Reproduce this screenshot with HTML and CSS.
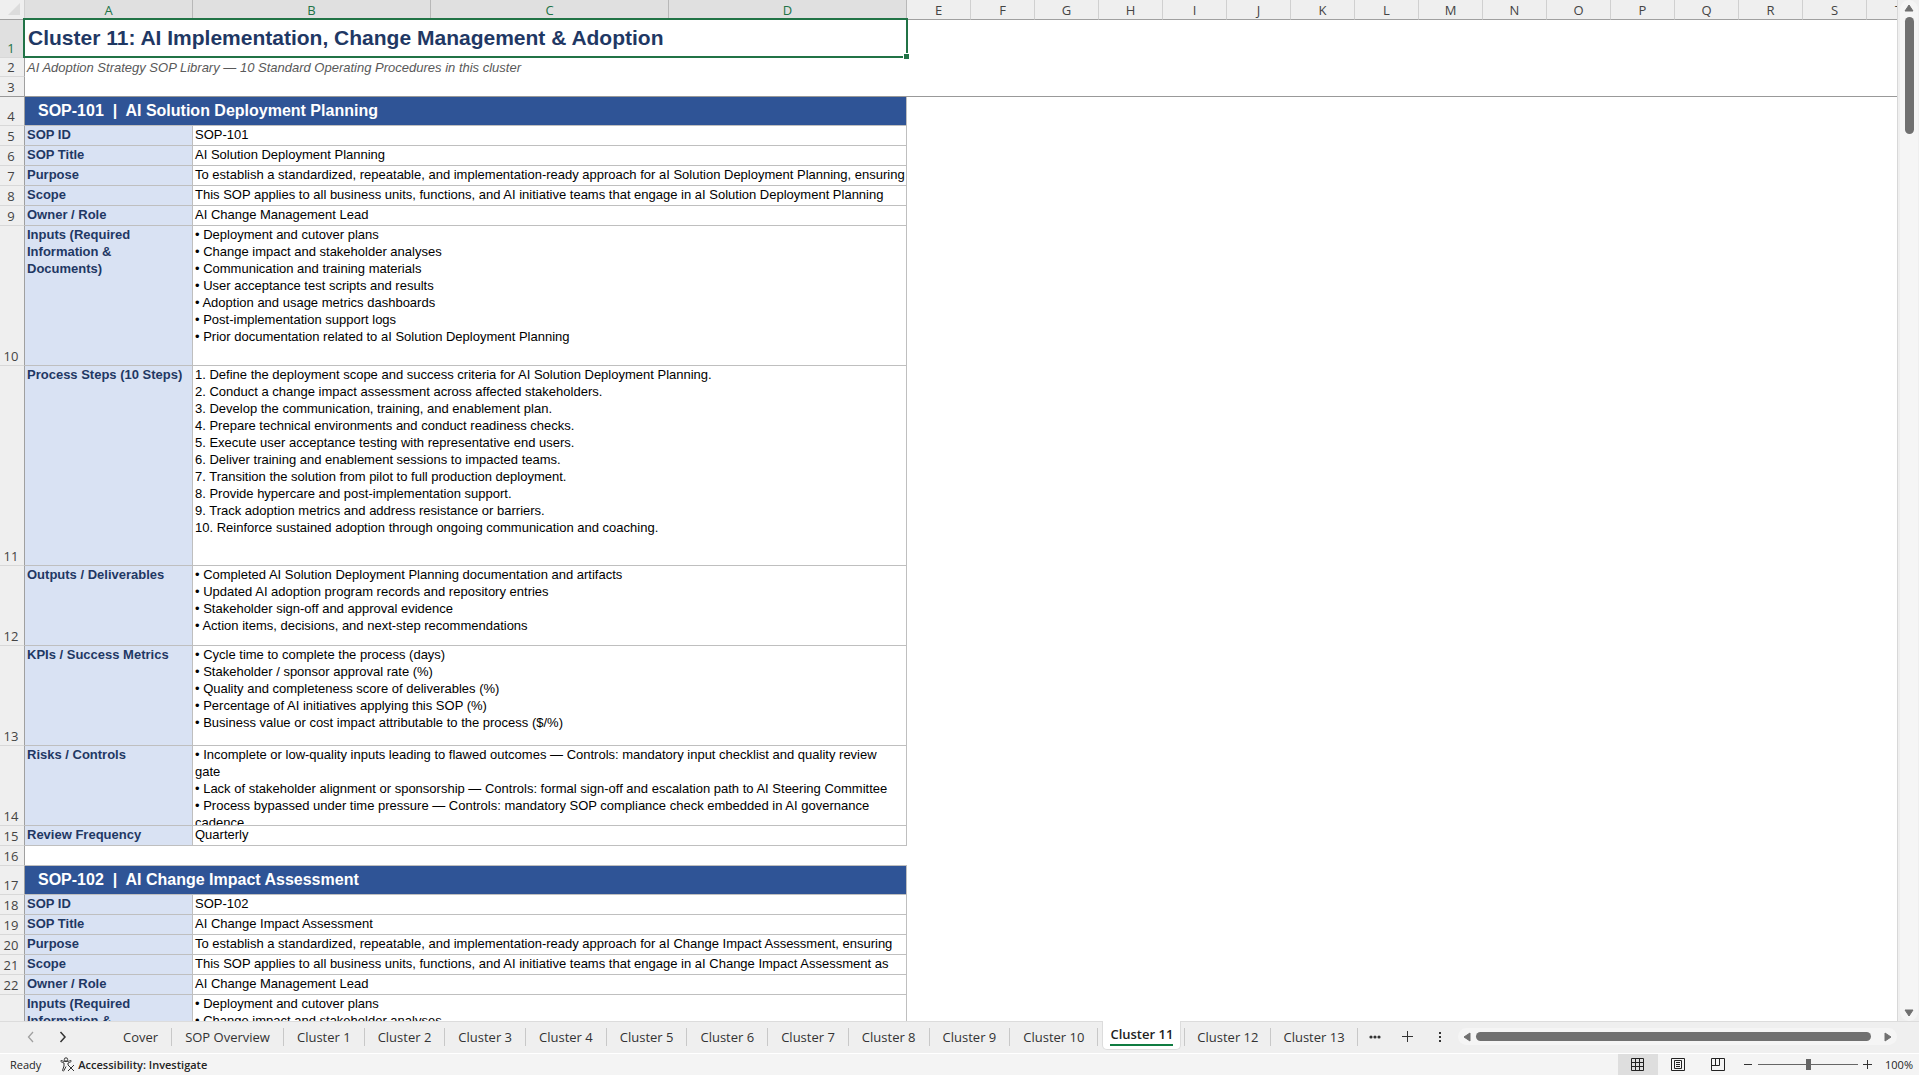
FILE: index.html
```html
<!DOCTYPE html>
<html lang="en">
<head>
    <meta charset="UTF-8">
    <meta name="viewport" content="width=device-width, initial-scale=1.0">
    <title>Cluster 11</title>
    <link rel="stylesheet" href="styles.css">
</head>
<body>

<div class="workspace">
    <div class="sheet">
        <table class="grid">
            <colgroup>
                <col class="col-rowhead">
                <col class="col-a">
                <col class="col-wide"><col class="col-wide"><col class="col-wide">
                <col class="col-std"><col class="col-std"><col class="col-std"><col class="col-std">
                <col class="col-std"><col class="col-std"><col class="col-std"><col class="col-std">
                <col class="col-std"><col class="col-std"><col class="col-std"><col class="col-std">
                <col class="col-std"><col class="col-std"><col class="col-std"><col class="col-std">
            </colgroup>
            <thead>
                <tr>
                    <th class="corner"><svg width="13" height="13" viewBox="0 0 13 13"><path d="M12 0v12H0z" fill="#dcdcdc"/></svg></th>
                    <th class="active">A</th><th class="active">B</th><th class="active">C</th><th class="active">D</th>
                    <th>E</th><th>F</th><th>G</th><th>H</th><th>I</th><th>J</th><th>K</th><th>L</th>
                    <th>M</th><th>N</th><th>O</th><th>P</th><th>Q</th><th>R</th><th>S</th><th>T</th>
                </tr>
            </thead>
            <tbody>
                <tr class="row-title">
                    <th class="active">1</th>
                    <td class="title" colspan="4">Cluster 11: AI Implementation, Change Management &amp; Adoption<span class="fill-handle"></span></td>
                    <td class="rest" colspan="16"></td>
                </tr>
                <tr class="row-sub">
                    <th>2</th>
                    <td class="subtitle" colspan="4">AI Adoption Strategy SOP Library — 10 Standard Operating Procedures in this cluster</td>
                    <td class="rest" colspan="16"></td>
                </tr>
                <tr class="row frozen">
                    <th>3</th>
                    <td class="rest" colspan="20"></td>
                </tr>
                <tr class="row-band">
                    <th>4</th>
                    <td class="band" colspan="4">SOP-101&nbsp; |&nbsp; AI Solution Deployment Planning</td>
                </tr>
                <tr class="row"><th>5</th><td class="label">SOP ID</td><td class="value" colspan="3">SOP-101</td></tr>
                <tr class="row"><th>6</th><td class="label">SOP Title</td><td class="value" colspan="3">AI Solution Deployment Planning</td></tr>
                <tr class="row"><th>7</th><td class="label">Purpose</td><td class="value" colspan="3">To establish a standardized, repeatable, and implementation-ready approach for aI Solution Deployment Planning, ensuring</td></tr>
                <tr class="row"><th>8</th><td class="label">Scope</td><td class="value" colspan="3">This SOP applies to all business units, functions, and AI initiative teams that engage in aI Solution Deployment Planning</td></tr>
                <tr class="row"><th>9</th><td class="label">Owner / Role</td><td class="value" colspan="3">AI Change Management Lead</td></tr>
                <tr class="row-inputs">
                    <th>10</th>
                    <td class="label">Inputs (Required<br>Information &amp;<br>Documents)</td>
                    <td class="value" colspan="3">
                        • Deployment and cutover plans<br>
                        • Change impact and stakeholder analyses<br>
                        • Communication and training materials<br>
                        • User acceptance test scripts and results<br>
                        • Adoption and usage metrics dashboards<br>
                        • Post-implementation support logs<br>
                        • Prior documentation related to aI Solution Deployment Planning
                    </td>
                </tr>
                <tr class="row-steps">
                    <th>11</th>
                    <td class="label">Process Steps (10 Steps)</td>
                    <td class="value" colspan="3">
                        1. Define the deployment scope and success criteria for AI Solution Deployment Planning.<br>
                        2. Conduct a change impact assessment across affected stakeholders.<br>
                        3. Develop the communication, training, and enablement plan.<br>
                        4. Prepare technical environments and conduct readiness checks.<br>
                        5. Execute user acceptance testing with representative end users.<br>
                        6. Deliver training and enablement sessions to impacted teams.<br>
                        7. Transition the solution from pilot to full production deployment.<br>
                        8. Provide hypercare and post-implementation support.<br>
                        9. Track adoption metrics and address resistance or barriers.<br>
                        10. Reinforce sustained adoption through ongoing communication and coaching.
                    </td>
                </tr>
                <tr class="row-outputs">
                    <th>12</th>
                    <td class="label">Outputs / Deliverables</td>
                    <td class="value" colspan="3">
                        • Completed AI Solution Deployment Planning documentation and artifacts<br>
                        • Updated AI adoption program records and repository entries<br>
                        • Stakeholder sign-off and approval evidence<br>
                        • Action items, decisions, and next-step recommendations
                    </td>
                </tr>
                <tr class="row-kpis">
                    <th>13</th>
                    <td class="label">KPIs / Success Metrics</td>
                    <td class="value" colspan="3">
                        • Cycle time to complete the process (days)<br>
                        • Stakeholder / sponsor approval rate (%)<br>
                        • Quality and completeness score of deliverables (%)<br>
                        • Percentage of AI initiatives applying this SOP (%)<br>
                        • Business value or cost impact attributable to the process ($/%)
                    </td>
                </tr>
                <tr class="row-outputs">
                    <th>14</th>
                    <td class="label">Risks / Controls</td>
                    <td class="value" colspan="3">
                        <div class="clip">
                            • Incomplete or low-quality inputs leading to flawed outcomes — Controls: mandatory input checklist and quality review<br>gate<br>
                            • Lack of stakeholder alignment or sponsorship — Controls: formal sign-off and escalation path to AI Steering Committee<br>
                            • Process bypassed under time pressure — Controls: mandatory SOP compliance check embedded in AI governance<br>cadence
                        </div>
                    </td>
                </tr>
                <tr class="row"><th>15</th><td class="label">Review Frequency</td><td class="value" colspan="3">Quarterly</td></tr>
                <tr class="row"><th>16</th><td class="spacer" colspan="4"></td></tr>
                <tr class="row-band">
                    <th>17</th>
                    <td class="band" colspan="4">SOP-102&nbsp; |&nbsp; AI Change Impact Assessment</td>
                </tr>
                <tr class="row"><th>18</th><td class="label">SOP ID</td><td class="value" colspan="3">SOP-102</td></tr>
                <tr class="row"><th>19</th><td class="label">SOP Title</td><td class="value" colspan="3">AI Change Impact Assessment</td></tr>
                <tr class="row"><th>20</th><td class="label">Purpose</td><td class="value" colspan="3">To establish a standardized, repeatable, and implementation-ready approach for aI Change Impact Assessment, ensuring</td></tr>
                <tr class="row"><th>21</th><td class="label">Scope</td><td class="value" colspan="3">This SOP applies to all business units, functions, and AI initiative teams that engage in aI Change Impact Assessment as</td></tr>
                <tr class="row"><th>22</th><td class="label">Owner / Role</td><td class="value" colspan="3">AI Change Management Lead</td></tr>
                <tr class="row-inputs">
                    <th></th>
                    <td class="label">Inputs (Required<br>Information &amp;</td>
                    <td class="value" colspan="3">• Deployment and cutover plans<br>• Change impact and stakeholder analyses</td>
                </tr>
            </tbody>
        </table>
    </div>
    <div class="vscroll">
        <button class="arrow" aria-label="Scroll up"><svg width="10" height="8" viewBox="0 0 10 8"><path d="M5 1L9 7H1z" fill="#707070" stroke="#707070" stroke-linejoin="round"/></svg></button>
        <div class="vthumb"></div>
        <button class="arrow arrow-down" aria-label="Scroll down"><svg width="10" height="8" viewBox="0 0 10 8"><path d="M5 7L9 1H1z" fill="#707070" stroke="#707070" stroke-linejoin="round"/></svg></button>
    </div>
</div>

<div class="tabbar">
    <div class="tabnav">
        <button aria-label="Previous sheets"><svg width="8" height="12" viewBox="0 0 8 12"><path d="M6 1L1.500 6 6 11" fill="none" stroke="#a0a0a0" stroke-width="1.300"/></svg></button>
        <button aria-label="Next sheets"><svg width="8" height="12" viewBox="0 0 8 12"><path d="M1.500 1L6 6l-4.500 5" fill="none" stroke="#333" stroke-width="1.500"/></svg></button>
    </div>
    <nav class="tabs">
        <a href="#">Cover</a>
        <a href="#">SOP Overview</a>
        <a href="#">Cluster 1</a>
        <a href="#">Cluster 2</a>
        <a href="#">Cluster 3</a>
        <a href="#">Cluster 4</a>
        <a href="#">Cluster 5</a>
        <a href="#">Cluster 6</a>
        <a href="#">Cluster 7</a>
        <a href="#">Cluster 8</a>
        <a href="#">Cluster 9</a>
        <a href="#">Cluster 10</a>
        <a href="#" class="current"><span>Cluster 11</span></a>
        <a href="#">Cluster 12</a>
        <a href="#">Cluster 13</a>
    </nav>
    <div class="tabtools">
        <button aria-label="More sheets"><svg width="12" height="4" viewBox="0 0 12 4"><g fill="#333"><circle cx="2" cy="2" r="1.600"/><circle cx="6" cy="2" r="1.600"/><circle cx="10" cy="2" r="1.600"/></g></svg></button>
        <button aria-label="New sheet"><svg width="12" height="12" viewBox="0 0 12 12"><path d="M5.500 0v11M0 5.500h11" stroke="#333"/></svg></button>
        <button class="grip" aria-label="Resize tabs"><svg width="2" height="10" viewBox="0 0 2 10"><path d="M0 0h2v2H0zM0 4h2v2H0zM0 8h2v2H0z" fill="#333"/></svg></button>
    </div>
    <div class="hscroll">
        <button class="arrow" aria-label="Scroll left"><svg width="8" height="10" viewBox="0 0 8 10"><path d="M1 5l6-4v8z" fill="#707070" stroke="#707070" stroke-linejoin="round"/></svg></button>
        <div class="hthumb"></div>
        <button class="arrow" aria-label="Scroll right"><svg width="8" height="10" viewBox="0 0 8 10"><path d="M7 5L1 1v8z" fill="#707070" stroke="#707070" stroke-linejoin="round"/></svg></button>
    </div>
</div>

<div class="statusbar">
    <span class="ready">Ready</span>
    <button class="access">
        <svg width="15" height="15" viewBox="0 0 15 15" fill="none" stroke="#333"><circle cx="6" cy="2.500" r="1.700"/><path d="M1 3.500c-.8.800 0 1.500 3 2.500v3L2.500 13.500c.5 1 1.200.5 1.500 0L6 9.500M11 3.500c.8.800 0 1.500-3 2.500v2M1 3.500c1 0 2 1 5 1s4-1 5-1M8 8l6 6M14 8l-6 6"/></svg>
        Accessibility: Investigate
    </button>
    <div class="views">
        <button class="view on" aria-label="Normal view"><svg width="14" height="13" viewBox="0 0 14 13" fill="none" stroke="#222"><path d="M.5.500h12v12H.5zM4.500.500v12M8.500.500v12M.5 4.500h12M.5 8.500h12"/></svg></button>
        <button class="view" aria-label="Page layout"><svg width="14" height="13" viewBox="0 0 14 13" fill="none" stroke="#222"><path d="M.5.500h13v12H.5zM3.500 2.500h7v8h-7zM5 4.500h4M5 6.500h4M5 8.500h4"/></svg></button>
        <button class="view" aria-label="Page break preview"><svg width="14" height="13" viewBox="0 0 14 13" fill="none" stroke="#222"><path d="M.5.500h13v12H.5zM.5 7.500h8v-7M4.500.500v7"/></svg></button>
    </div>
    <div class="zoom">
        <button aria-label="Zoom out"><svg width="9" height="9" viewBox="0 0 9 9"><path d="M0 4.500h8" stroke="#333"/></svg></button>
        <input type="range" min="0" max="100" value="50" aria-label="Zoom">
        <button aria-label="Zoom in"><svg width="9" height="9" viewBox="0 0 9 9"><path d="M0 4.500h9M4.500 0v9" stroke="#333"/></svg></button>
        <span class="percent">100%</span>
    </div>
</div>

</body>
</html>
```

FILE: styles.css
```css
* {
    box-sizing: border-box;
}
body {
    margin: 0;
    height: 100vh;
    display: flex;
    flex-direction: column;
    overflow: hidden;
    background-color: #efefef;
    color: #242424;
    font-family: "Open Sans", "Noto Sans", sans-serif;
}
button {
    display: flex;
    align-items: center;
    justify-content: center;
    padding: 0;
    border: 0;
    background: none;
    color: inherit;
    font: inherit;
}

/* sheet */
.workspace {
    flex: 1;
    min-height: 0;
    display: flex;
}
.sheet {
    flex: 1;
    min-width: 0;
    overflow: hidden;
    background-color: #fff;
    border-right: 1px solid #d8d8d8;
}
.grid {
    width: 1931px; /* sum of the columns */
    table-layout: fixed;
    border-collapse: separate;
    border-spacing: 0;
    font-family: "Liberation Sans", Arial, sans-serif;
    font-size: 13px;
    line-height: 17px;
}
.col-rowhead { width: 25px; }
.col-a { width: 168px; }
.col-wide { width: 238px; }
.col-std { width: 64px; }
.grid th {
    padding: 0;
    height: 20px;
    background-color: #efefef;
    color: #444;
    font-family: "Open Sans", "Noto Sans", sans-serif;
    font-size: 13px;
    font-weight: normal;
    line-height: 18px;
}
.grid thead th {
    border-right: 1px solid #d0d0d0;
    border-bottom: 1px solid #a0a0a0;
}
.grid tbody th {
    padding-right: 2px;
    vertical-align: bottom;
    border-right: 1px solid #a0a0a0;
    border-bottom: 1px solid #d8d8d8;
}
.grid thead .active {
    background-color: #e0e0e0;
    color: #217346;
    border-right-color: #b8b8b8;
}
.grid tbody .active {
    background-color: #e0e0e0;
    color: #217346;
}
.grid thead .corner {
    text-align: right;
    padding-right: 3px;
}
.corner svg {
    display: block;
    margin-left: auto;
}
.grid td {
    padding: 0 2px;
    vertical-align: top;
    white-space: nowrap;
}
.row { height: 20px; }
.row-title { height: 38px; }
.row-sub { height: 19px; }
.grid .row-sub th { height: 19px; }
.row-band { height: 29px; }
.row-inputs { height: 140px; }
.row-steps { height: 200px; }
.row-outputs { height: 80px; }
.row-kpis { height: 100px; }
.grid .title {
    position: relative;
    padding: 0 3px 2px;
    vertical-align: middle;
    color: #1f3864;
    font-size: 21px;
    font-weight: bold;
    line-height: 24px;
}
/* selection frame, drawn over the neighbouring cells */
.title::after {
    content: "";
    position: absolute;
    top: -2px;
    right: -1px;
    bottom: 0;
    left: -2px;
    border: 2px solid #217346;
}
.fill-handle {
    position: absolute;
    z-index: 1;
    right: -2px;
    bottom: -1px;
    width: 5px;
    height: 5px;
    background-color: #217346;
    box-shadow: 0 0 0 1px #fff;
}
.grid .subtitle {
    padding-top: 1px;
    color: #595959;
    font-style: italic;
}
.frozen th,
.frozen td {
    border-bottom: 1px solid #999 !important;
}
.grid .band {
    padding: 0 13px 2px;
    vertical-align: middle;
    background-color: #2f5496;
    color: #fff;
    font-size: 16px;
    font-weight: bold;
    border-right: 1px solid #bfbfbf;
    border-bottom: 1px solid #bfbfbf;
}
.grid .label {
    background-color: #d9e2f3;
    color: #1f3864;
    font-weight: bold;
    border-right: 1px solid #bfbfbf;
    border-bottom: 1px solid #bfbfbf;
}
.grid .value {
    color: #000;
    border-right: 1px solid #bfbfbf;
    border-bottom: 1px solid #bfbfbf;
}
.grid .spacer {
    border-bottom: 1px solid #bfbfbf;
}
.clip {
    height: 79px;
    overflow: hidden;
}

/* scrollbars */
.vscroll {
    width: 18px;
    margin: 0 1px 0 2px;
    padding: 4px 0;
    display: flex;
    flex-direction: column;
    align-items: center;
    border-radius: 9px;
    background-color: #f5f5f5;
}
.vthumb {
    width: 9px;
    height: 117px;
    margin-top: 5px;
    border-radius: 5px;
    background-color: #707070;
}
.arrow-down {
    margin-top: auto;
}

/* sheet tabs */
.tabbar {
    height: 33px;
    display: flex;
    align-items: center;
    padding: 0 22px 2px 0;
    border-top: 1px solid #dcdcdc;
    border-bottom: 1px solid #fff;
    background-color: #efefef;
    font-size: 13px;
}
.tabnav {
    width: 110px;
    display: flex;
    gap: 24px;
    padding-left: 27px;
}
.tabs {
    display: flex;
    align-self: stretch;
    align-items: center;
}
.tabs a {
    padding: 0 13px;
    border-right: 1px solid #c8c8c8;
    color: #333;
    line-height: 18px;
    text-decoration: none;
    white-space: nowrap;
}
.tabs .current {
    align-self: flex-start;
    height: 29px;
    margin: -1px 3px 0 4px;
    padding: 4px 7px 0;
    border: 1px solid #dcdcdc;
    border-top: 0;
    border-radius: 0 0 5px 5px;
    background-color: #fff;
    color: #222;
    font-weight: 600;
}
.tabs .current ~ a {
    padding: 0 12px;
}
.tabs .current + a {
    border-left: 1px solid #c8c8c8;
}
.current span {
    display: block;
    line-height: 19px;
    border-bottom: 2px solid #107c41;
}
.tabtools {
    display: flex;
    align-items: center;
    gap: 21px;
    padding: 0 17px 0 11px;
}
.grip {
    margin-left: 4px;
}
.hscroll {
    flex: 1;
    height: 17px;
    display: flex;
    align-items: center;
    padding: 0 5px;
    border-radius: 9px;
    background-color: #f5f5f5;
}
.hthumb {
    flex: 1;
    height: 9px;
    margin: 0 13px 0 5px;
    border-radius: 5px;
    background-color: #707070;
}

/* status bar */
.statusbar {
    height: 21px;
    display: flex;
    align-items: center;
    padding: 0 6px 0 10px;
    background-color: #f4f4f4;
    font-size: 11px;
}
.access {
    gap: 3px;
    margin-left: 19px;
    font-weight: 600;
}
.views {
    display: flex;
    align-self: stretch;
    margin-left: auto;
}
.view {
    width: 40px;
}
.view.on {
    background-color: #dedede;
}
.zoom {
    display: flex;
    align-items: center;
    gap: 5px;
    margin-left: 6px;
}
.zoom input {
    appearance: none;
    width: 100px;
    height: 11px;
    margin: 0;
    background: linear-gradient(#666, #666) center / 100% 1px no-repeat;
}
.zoom input::-webkit-slider-thumb {
    appearance: none;
    width: 5px;
    height: 11px;
    background-color: #666;
}
.percent {
    margin-left: 8px;
}
```
